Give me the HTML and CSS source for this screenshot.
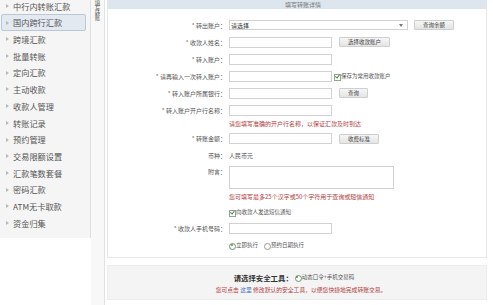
FILE: index.html
```html
<!DOCTYPE html>
<html lang="zh-CN">
<head>
    <meta charset="UTF-8">
    <title>国内跨行汇款</title>
    <link rel="stylesheet" href="styles.css">
</head>
<body>
    <div class="page">
        <ul class="side-nav">
            <li>中行内转账汇款</li>
            <li class="active">国内跨行汇款</li>
            <li>跨境汇款</li>
            <li>批量转账</li>
            <li>定向汇款</li>
            <li>主动收款</li>
            <li>收款人管理</li>
            <li>转账记录</li>
            <li>预约管理</li>
            <li>交易限额设置</li>
            <li>汇款笔数套餐</li>
            <li>密码汇款</li>
            <li>ATM无卡取款</li>
            <li>资金归集</li>
        </ul>

        <div class="tab-strip"><span>填写转账</span></div>

        <div class="main">
            <div class="main-head">填写转账详情</div>

            <div class="form-panel">
                <div class="row">
                    <div class="lbl"><i>*</i> 转出账户：</div>
                    <div class="fld">
                        <div class="select"><span>请选择</span><b class="caret"></b></div>
                        <button class="btn btn-balance">查询余额</button>
                    </div>
                </div>
                <div class="row">
                    <div class="lbl"><i>*</i> 收款人姓名：</div>
                    <div class="fld">
                        <input class="txt" type="text">
                        <button class="btn">选择收款账户</button>
                    </div>
                </div>
                <div class="row">
                    <div class="lbl"><i>*</i> 转入账户：</div>
                    <div class="fld"><input class="txt" type="text"></div>
                </div>
                <div class="row">
                    <div class="lbl"><i>*</i> 请再输入一次转入账户：</div>
                    <div class="fld">
                        <input class="txt" type="text">
                        <span class="check on save">保存为常用收款账户</span>
                    </div>
                </div>
                <div class="row">
                    <div class="lbl"><i>*</i> 转入账户所属银行：</div>
                    <div class="fld">
                        <input class="txt" type="text">
                        <button class="btn">查询</button>
                    </div>
                </div>
                <div class="row">
                    <div class="lbl"><i>*</i> 转入账户开户行名称：</div>
                    <div class="fld"><input class="txt" type="text"></div>
                </div>
                <div class="row hint-row">
                    <div></div>
                    <div class="hint">请您填写准确的开户行名称，以保证汇款及时到达</div>
                </div>
                <div class="row">
                    <div class="lbl"><i>*</i> 转账金额：</div>
                    <div class="fld">
                        <input class="txt" type="text">
                        <button class="btn">收费标准</button>
                    </div>
                </div>
                <div class="row">
                    <div class="lbl">币种：</div>
                    <div class="fld plain">人民币元</div>
                </div>
                <div class="row memo-row">
                    <div class="lbl">附言：</div>
                    <div class="fld"><textarea class="memo"></textarea></div>
                </div>
                <div class="row hint-row2">
                    <div></div>
                    <div class="hint">您可填写最多25个汉字或50个字符用于查询或短信通知</div>
                </div>
                <div class="row short">
                    <div></div>
                    <div class="fld"><span class="check on">向收款人发送短信通知</span></div>
                </div>
                <div class="row short">
                    <div class="lbl"><i>*</i> 收款人手机号码：</div>
                    <div class="fld"><input class="txt" type="text"></div>
                </div>
                <div class="row radio-row">
                    <div></div>
                    <div class="fld">
                        <span class="radio on">立即执行</span>
                        <span class="radio">预约日期执行</span>
                    </div>
                </div>
            </div>

            <div class="tool-panel">
                <div class="tool-line">
                    <strong>请选择安全工具：</strong>
                    <span class="radio on">动态口令+手机交易码</span>
                </div>
                <div class="tool-note">您可点击 <a href="#">这里</a> 修改默认的安全工具，以便您快捷地完成转账交易。</div>
            </div>
        </div>
    </div>
</body>
</html>
```

FILE: styles.css
```css
* {
    margin: 0;
    padding: 0;
    box-sizing: border-box;
}

body {
    background: #fff;
    font-family: "Noto Sans CJK SC", "Noto Sans", sans-serif;
    color: #444;
}

.page {
    display: flex;
    align-items: flex-start;
    width: 493px;
    height: 305px;
    overflow: hidden;
}

/* 左侧菜单 */
.side-nav {
    list-style: none;
    width: 91px;
    height: 238px;
    background: #f5f5f5;
    border-right: 1px solid #e0e0e0;
    flex-shrink: 0;
}

.side-nav li {
    position: relative;
    height: 16.7px;
    line-height: 16.7px;
    padding-left: 13px;
    font-size: 8.2px;
    color: #555;
    white-space: nowrap;
}

.side-nav li:first-child {
    margin-top: -2.3px;
}

.side-nav li::before {
    content: "";
    position: absolute;
    left: 6px;
    top: 50%;
    margin-top: -2px;
    border-left: 3px solid #b8b8b8;
    border-top: 2px solid transparent;
    border-bottom: 2px solid transparent;
}

.side-nav li.active {
    margin-left: 1px;
    margin-right: 4px;
    padding-left: 11px;
    line-height: 14.7px;
    background: #e3e9f1;
    border: 1px solid #bcc7d6;
    border-radius: 2px;
}

.side-nav li.active::before {
    left: 4px;
}

/* 竖向标签 */
.tab-strip {
    width: 14px;
    height: 305px;
    background: #f8f8f8;
    border-right: 1px solid #e2e2e2;
    flex-shrink: 0;
}

.tab-strip span {
    display: block;
    writing-mode: vertical-rl;
    font-size: 5.5px;
    line-height: 6px;
    color: #555;
    margin: 0 auto;
    width: 6px;
    letter-spacing: -0.3px;
}

/* 主区域 */
.main {
    width: 388px;
    padding: 0 6px 0 2px;
    flex-shrink: 0;
}

.main-head {
    height: 9px;
    line-height: 9px;
    background: #dde6ef;
    font-size: 6px;
    color: #777;
    text-align: center;
    padding-left: 12px;
}

.form-panel {
    height: 249px;
    border: 1px solid #e8e8e8;
    border-top: none;
    padding-top: 7.5px;
}

.row {
    display: grid;
    grid-template-columns: 118px 1fr;
    column-gap: 3px;
    align-items: center;
    height: 17px;
}

.lbl {
    text-align: right;
    font-size: 6px;
    color: #555;
    white-space: nowrap;
}

.lbl i {
    font-style: normal;
    color: #777;
}

.fld {
    display: flex;
    align-items: center;
    font-size: 6px;
    color: #555;
}

.txt {
    width: 103px;
    height: 11px;
    border: 1px solid #d2d2d2;
    background: #fff;
    outline: none;
}

.select {
    width: 179px;
    height: 10px;
    border: 1px solid #d2d2d2;
    background: #fff;
    display: flex;
    align-items: center;
    justify-content: space-between;
    padding: 0 4px 0 1px;
    font-size: 6px;
    color: #333;
}

.caret {
    border-top: 3px solid #777;
    border-left: 2.5px solid transparent;
    border-right: 2.5px solid transparent;
}

.btn {
    height: 10px;
    margin-left: 7px;
    padding: 0 8px;
    font-family: inherit;
    font-size: 5.5px;
    line-height: 8px;
    color: #444;
    background: linear-gradient(#f6f6f6, #e4e4e4);
    border: 1px solid #cfcfcf;
    border-radius: 1px;
}

.btn-balance {
    margin-left: 6px;
}

.check,
.radio {
    position: relative;
    padding-left: 7px;
    font-size: 5.5px;
    color: #555;
    white-space: nowrap;
}

.check::before {
    content: "";
    position: absolute;
    left: 0;
    top: 50%;
    width: 5px;
    height: 5px;
    margin-top: -2.5px;
    border: 1px solid #8aa88a;
    background: #fff;
}

.check.on::after {
    content: "";
    position: absolute;
    left: 1.6px;
    top: 50%;
    width: 1.6px;
    height: 2.6px;
    margin-top: -2px;
    border-right: 1px solid #4f8a4f;
    border-bottom: 1px solid #4f8a4f;
    transform: rotate(40deg);
}

.check.save {
    margin-left: 2px;
}

.radio::before {
    content: "";
    position: absolute;
    left: 0;
    top: 50%;
    width: 5px;
    height: 5px;
    margin-top: -2.5px;
    border: 1px solid #999;
    border-radius: 50%;
    background: #fff;
}

.radio.on::before {
    border-color: #6f946f;
}

.radio.on::after {
    content: "";
    position: absolute;
    left: 1.5px;
    top: 50%;
    width: 2px;
    height: 2px;
    margin-top: -1px;
    border-radius: 50%;
    background: #5c835c;
}

.radio + .radio {
    margin-left: 6px;
}

.hint {
    font-size: 6px;
    line-height: 9px;
    color: #b0403e;
    white-space: nowrap;
}

.hint-row {
    height: 11.5px;
    align-items: start;
}

.memo-row {
    height: 25px;
    align-items: start;
}

.memo-row .lbl {
    padding-top: 3px;
    line-height: 10px;
}

.memo {
    width: 165px;
    height: 23px;
    margin-top: 2px;
    border: 1px solid #d2d2d2;
    resize: none;
    outline: none;
}

.hint-row2 {
    height: 15px;
    align-items: start;
    padding-top: 3px;
}

.row.short {
    height: 16px;
}

.radio-row {
    height: 18px;
}

/* 安全工具 */
.tool-panel {
    margin-top: 7px;
    height: 35px;
    background: #f4f4f4;
    border: 1px solid #ededed;
    display: flex;
    flex-direction: column;
    align-items: center;
    padding-top: 5px;
}

.tool-line {
    display: flex;
    align-items: center;
    height: 12px;
    margin-left: -6px;
}

.tool-line strong {
    font-size: 7.4px;
    color: #333;
    margin-right: 2px;
}

.tool-note {
    margin-top: 2px;
    font-size: 5.8px;
    line-height: 9px;
    color: #b0403e;
    white-space: nowrap;
    margin-left: 8px;
}

.tool-note a {
    color: #3a6fb0;
    text-decoration: none;
}
```
